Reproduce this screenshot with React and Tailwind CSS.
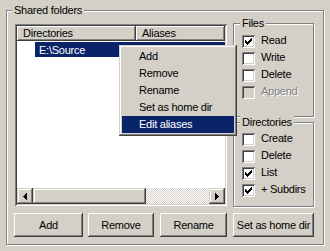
import React from "react";

const raised = "shadow-[inset_-1px_-1px_#404040,inset_1px_1px_#fff,inset_-2px_-2px_#808080]";
const raisedSoft = "shadow-[inset_-1px_-1px_#404040,inset_1px_1px_#d4d0c8,inset_-2px_-2px_#808080,inset_2px_2px_#fff]";
const sunken = "shadow-[inset_1px_1px_#808080,inset_-1px_-1px_#fff,inset_2px_2px_#404040,inset_-2px_-2px_#d4d0c8]";

function Check() {
  return (
    <svg width="7" height="7" viewBox="0 0 7 7" shapeRendering="crispEdges" className="block">
      <path
        d="M6 0h1v1h-1z M5 1h2v1h-2z M0 2h1v1h-1z M4 2h3v1h-3z M0 3h2v1h-2z M3 3h3v1h-3z M0 4h5v1h-5z M1 5h3v1h-3z M2 6h1v1h-1z"
        fill="#000"
      />
    </svg>
  );
}

function CheckBox({ label, checked, disabled }) {
  return (
    <div className="flex items-center h-[13px] gap-[6px]">
      <div className={`w-[13px] h-[13px] shrink-0 p-[3px] ${disabled ? "bg-[#d4d0c8]" : "bg-white"} ${sunken}`}>
        {checked && <Check />}
      </div>
      <span className={`leading-[13px] -mt-[2px] ${disabled ? "text-[#808080] [text-shadow:1px_1px_0_#fff]" : ""}`}>
        {label}
      </span>
    </div>
  );
}

function GroupBox({ title, labelClass, className, children }) {
  return (
    <div className={`relative border border-[#808080] shadow-[inset_1px_1px_#fff,1px_1px_#fff] ${className}`}>
      <span className={`absolute top-[-7px] bg-[#d4d0c8] px-[2px] leading-[13px] whitespace-nowrap ${labelClass}`}>
        {title}
      </span>
      {children}
    </div>
  );
}

function Button({ children, className }) {
  return (
    <div className={`h-[24px] flex items-center justify-center bg-[#d4d0c8] ${raised} ${className}`}>
      <span className="leading-[13px]">{children}</span>
    </div>
  );
}

function ArrowLeft() {
  return (
    <svg width="4" height="7" viewBox="0 0 4 7" shapeRendering="crispEdges" className="block">
      <path d="M3 0h1v7h-1z M2 1h1v5h-1z M1 2h1v3h-1z M0 3h1v1h-1z" fill="#000" />
    </svg>
  );
}

function ArrowRight() {
  return (
    <svg width="4" height="7" viewBox="0 0 4 7" shapeRendering="crispEdges" className="block">
      <path d="M0 0h1v7h-1z M1 1h1v5h-1z M2 2h1v3h-1z M3 3h1v1h-1z" fill="#000" />
    </svg>
  );
}

const menuItems = ["Add", "Remove", "Rename", "Set as home dir", "Edit aliases"];

export default function App() {
  return (
    <div
      className="relative w-[330px] h-[251px] bg-[#d4d0c8] overflow-hidden pt-[10px] pl-[6px] text-[11px] text-black leading-[13px] tracking-[-0.25px]"
      style={{ fontFamily: '"Liberation Sans", Arial, sans-serif' }}
    >
      <GroupBox title="Shared folders" labelClass="left-[5px]" className="w-[318px] h-[235px] pt-[13px] pl-[8px]">
        <div className="flex items-start">
          {/* List view */}
          <div className={`w-[212px] h-[182px] p-[2px] bg-white flex flex-col ${sunken}`}>
            <div className="flex h-[15px] bg-[#d4d0c8]">
              <div className={`w-[119px] h-full pl-[6px] pt-[1px] ${raised}`}>Directories</div>
              <div className={`flex-1 h-full pl-[6px] pt-[1px] ${raised}`}>Aliases</div>
            </div>
            <div className="flex-1">
              <div className="mt-[1px] ml-[18px] h-[15px] bg-[#0a246a] text-white pl-[4px] pt-[2px]">E:\Source</div>
            </div>
            <div className="flex h-[16px]">
              <div className={`w-[16px] h-full flex items-center justify-center bg-[#d4d0c8] ${raisedSoft}`}>
                <ArrowLeft />
              </div>
              <div className={`w-[113px] h-full bg-[#d4d0c8] ${raisedSoft}`} />
              <div className="flex-1 h-full bg-[repeating-conic-gradient(#fff_0_25%,#d4d0c8_0_50%)] bg-[length:2px_2px]" />
              <div className={`w-[16px] h-full flex items-center justify-center bg-[#d4d0c8] ${raisedSoft}`}>
                <ArrowRight />
              </div>
            </div>
          </div>

          {/* Permissions */}
          <div className="ml-[6px] -mt-[1px] flex flex-col">
            <GroupBox title="Files" labelClass="left-[6px]" className="w-[81px] h-[94px] pt-[11px] pl-[8px]">
              <div className="flex flex-col gap-[4px]">
                <CheckBox label="Read" checked />
                <CheckBox label="Write" />
                <CheckBox label="Delete" />
                <CheckBox label="Append" disabled />
              </div>
            </GroupBox>
            <GroupBox title="Directories" labelClass="left-[6px]" className="mt-[5px] w-[81px] h-[85px] pt-[10px] pl-[8px]">
              <div className="flex flex-col gap-[4px]">
                <CheckBox label="Create" />
                <CheckBox label="Delete" />
                <CheckBox label="List" checked />
                <CheckBox label="+ Subdirs" checked />
              </div>
            </GroupBox>
          </div>
        </div>

        <div className="flex mt-[6px] -ml-[1px]">
          <Button className="w-[69px]">Add</Button>
          <Button className="w-[66px] ml-[5px]">Remove</Button>
          <Button className="w-[67px] ml-[6px]">Rename</Button>
          <Button className="w-[81px] ml-[6px]">Set as home dir</Button>
        </div>
      </GroupBox>

      {/* Context menu */}
      <div className={`absolute left-[119px] top-[45px] w-[118px] p-[3px] bg-[#d4d0c8] ${raisedSoft}`}>
        {menuItems.map((item, i) => (
          <div
            key={item}
            className={`h-[17px] pl-[17px] flex items-center ${i === 4 ? "bg-[#0a246a] text-white" : ""}`}
          >
            {item}
          </div>
        ))}
      </div>
    </div>
  );
}
